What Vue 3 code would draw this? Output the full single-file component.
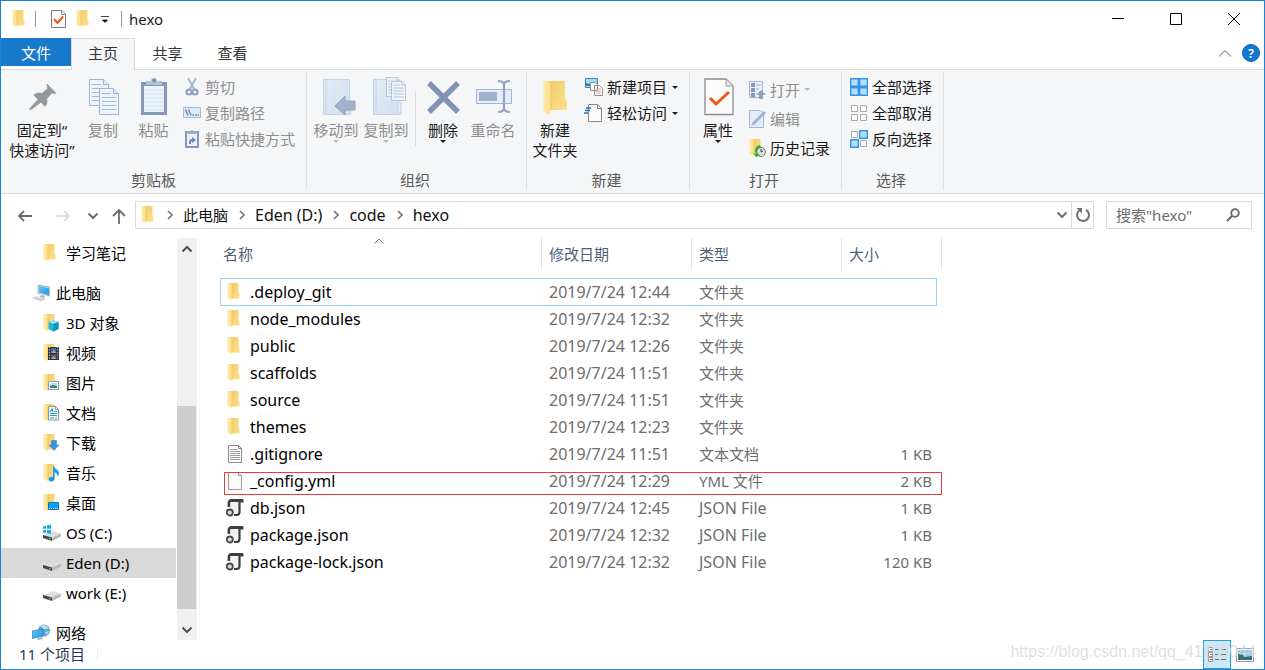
<script setup>
import { ref } from 'vue'

const tree = [
  { label: '学习笔记', icon: 'folder', level: 2 },
  { label: '此电脑', icon: 'pc', level: 1, spaced: true },
  { label: '3D 对象', icon: 'f-3d', level: 2 },
  { label: '视频', icon: 'f-video', level: 2 },
  { label: '图片', icon: 'f-picture', level: 2 },
  { label: '文档', icon: 'f-doc', level: 2 },
  { label: '下载', icon: 'f-download', level: 2 },
  { label: '音乐', icon: 'f-music', level: 2 },
  { label: '桌面', icon: 'f-desktop', level: 2 },
  { label: 'OS (C:)', icon: 'drive-os', level: 2 },
  { label: 'Eden (D:)', icon: 'drive', level: 2, selected: true },
  { label: 'work (E:)', icon: 'drive', level: 2 },
  { label: '网络', icon: 'network', level: 1, spaced: true }
]

const files = [
  { name: '.deploy_git', date: '2019/7/24 12:44', type: '文件夹', size: '', icon: 'folder', focused: true },
  { name: 'node_modules', date: '2019/7/24 12:32', type: '文件夹', size: '', icon: 'folder' },
  { name: 'public', date: '2019/7/24 12:26', type: '文件夹', size: '', icon: 'folder' },
  { name: 'scaffolds', date: '2019/7/24 11:51', type: '文件夹', size: '', icon: 'folder' },
  { name: 'source', date: '2019/7/24 11:51', type: '文件夹', size: '', icon: 'folder' },
  { name: 'themes', date: '2019/7/24 12:23', type: '文件夹', size: '', icon: 'folder' },
  { name: '.gitignore', date: '2019/7/24 11:51', type: '文本文档', size: '1 KB', icon: 'textfile' },
  { name: '_config.yml', date: '2019/7/24 12:29', type: 'YML 文件', size: '2 KB', icon: 'blankfile', marked: true },
  { name: 'db.json', date: '2019/7/24 12:45', type: 'JSON File', size: '1 KB', icon: 'json', latin: true },
  { name: 'package.json', date: '2019/7/24 12:32', type: 'JSON File', size: '1 KB', icon: 'json', latin: true },
  { name: 'package-lock.json', date: '2019/7/24 12:32', type: 'JSON File', size: '120 KB', icon: 'json', latin: true }
]

const crumbs = [
  { label: '此电脑' },
  { label: 'Eden (D:)', latin: true },
  { label: 'code', latin: true },
  { label: 'hexo', latin: true }
]
const query = ref('')
</script>

<template>
  <div class="window">
    <svg class="defs" aria-hidden="true">
      <defs>
        <linearGradient id="gBody" x1="0" y1="0" x2="1" y2="1">
          <stop offset="0" stop-color="#f0cb68" /><stop offset="1" stop-color="#ffdf8c" />
        </linearGradient>
        <linearGradient id="gFlap" x1="0" y1="0" x2="1" y2="0">
          <stop offset="0" stop-color="#ffe9a6" /><stop offset="1" stop-color="#fddf8b" />
        </linearGradient>
        <linearGradient id="gBlue" x1="0" y1="0" x2="1" y2="1">
          <stop offset="0" stop-color="#e4edf8" /><stop offset="1" stop-color="#d0def0" />
        </linearGradient>
        <linearGradient id="gScreen" x1="0" y1="0" x2="1" y2="1">
          <stop offset="0" stop-color="#67c5f7" /><stop offset="1" stop-color="#1d93e6" />
        </linearGradient>
      </defs>
      <symbol id="folder" viewBox="0 0 18 18">
        <path d="M3 0h8.500v10l1 1v4.500H5V4z" fill="url(#gBody)" />
        <path d="M0.500 0H3l2 2v15L.500 15z" fill="url(#gFlap)" />
        <path d="M5 2.500v12" stroke="#e6bd58" stroke-width=".6" />
      </symbol>
      <symbol id="f-3d" viewBox="0 0 18 18">
        <use href="#folder" width="18" height="18" />
        <path d="M5.500 8l5-1.500L15.500 8v7l-5 2.500-5-2.500z" fill="#22b5d5" />
        <path d="M5.500 8l5-1.500L15.500 8l-5 2z" fill="#8fe3f2" /><path d="M10.500 10l5-2v7l-5 2.500z" fill="#0994b8" />
      </symbol>
      <symbol id="f-video" viewBox="0 0 18 18">
        <use href="#folder" width="18" height="18" />
        <path d="M5 3h11v13H5z" fill="#333" /><path d="M6.500 3v13M14.500 3v13" stroke="#ccc" stroke-width="1.200" stroke-dasharray="1 1.600" />
        <path d="M8 4h5v5H8zM8 10.500h5V15H8z" fill="#3069bd" /><path d="M8 9l3-3 2 3zM8 15l3-3 2 3z" fill="#d7a456" />
      </symbol>
      <symbol id="f-picture" viewBox="0 0 18 18">
        <use href="#folder" width="18" height="18" />
        <path d="M5.500 7.500h10v8h-10z" fill="#fff" stroke="#959ba1" /><path d="M7 9h7v5H7z" fill="#b5def5" /><path d="M7 12l3-1 4 1v2H7z" fill="#397d88" />
      </symbol>
      <symbol id="f-doc" viewBox="0 0 18 18">
        <use href="#folder" width="18" height="18" />
        <path d="M5.500 2.500h7l3 3v10.500h-10z" fill="#fff" stroke="#8b949c" /><path d="M12.500 2.500v3h3" fill="none" stroke="#8b949c" />
        <path d="M7 8l2-3 1 3M11 7.500h3M7 9.500h7M7 11.500h7M11 14H7M12 14h2" stroke="#23a0c5" stroke-width="1.200" fill="none" />
      </symbol>
      <symbol id="f-download" viewBox="0 0 18 18">
        <use href="#folder" width="18" height="18" />
        <path d="M8.500 6.500h5v4.500H16l-5 5.500L6 11h2.500z" fill="#3b93df" stroke="#2979c5" stroke-width=".5" />
      </symbol>
      <symbol id="f-music" viewBox="0 0 18 18">
        <use href="#folder" width="18" height="18" />
        <path d="M10 2.500h1.500c0 3 4.500 3 4.500 6.500 0 1.500-.5 2.500-1.500 3.500 0-3-1.500-4-3-4v6c0 1.800-1.300 3-3.200 3-1.800 0-2.800-.9-2.800-2.100 0-1.700 2-3 4.500-2.600z" fill="#159df1" />
      </symbol>
      <symbol id="f-desktop" viewBox="0 0 18 18">
        <use href="#folder" width="18" height="18" />
        <path d="M5.500 8.500h10v7h-10z" fill="#159df1" stroke="#0873ba" /><path d="M6 14.500h9" stroke="#d4efff" stroke-dasharray="1 1" />
      </symbol>
      <symbol id="pc" viewBox="0 0 18 18">
        <path d="M6 1l12 2v9L6 9z" fill="#e8eef3" stroke="#687c8c" stroke-width=".6" /><path d="M7 2l10 2v7L7 8.500z" fill="url(#gScreen)" />
        <path d="M9 11l4 1-1 2-4-1z" fill="#aab5be" /><path d="M0 14l4-2 9 2.500-4 2z" fill="#d6dce1" /><path d="M1 14l8 2.500 4-2" stroke="#a2adb5" fill="none" stroke-width=".7" />
      </symbol>
      <symbol id="drive" viewBox="0 0 18 18">
        <path d="M0 11l10-4 8 2.500-9 4z" fill="#dedede" /><path d="M0 11l9 2.500V17L0 14z" fill="#464646" /><path d="M9 13.500l9-4v3L9 17z" fill="#b8b8b8" /><path d="M6 14.500l1.500.4" stroke="#4ee354" stroke-width="1.300" />
      </symbol>
      <symbol id="drive-os" viewBox="0 0 18 18">
        <use href="#drive" width="18" height="18" />
        <path d="M-.2 2.500l3.200-.7v3H-.2zM4 1.500l4-.8v4H4zM-.2 6H3v3l-3.200-.6zM4 6h4v4l-4-.7z" fill="#12aee8" />
      </symbol>
      <symbol id="network" viewBox="0 0 18 18">
        <circle cx="12" cy="6.500" r="6" fill="#55a8d5" /><path d="M8 3c3-4 8-1 9 2-2-1-3 1-5 0s-1-2-4-2M13 8l4-1-2 4z" fill="#b8dcec" />
        <path d="M0 7l11-2v7L0 14.500z" fill="url(#gScreen)" stroke="#2674b5" stroke-width=".6" /><path d="M5 14l1 2 5-1-1-2z" fill="#9db6c8" />
      </symbol>
      <symbol id="textfile" viewBox="0 0 18 18">
        <path d="M1.500.500h10l3 3v14h-13z" fill="#fff" stroke="#8a8a8a" /><path d="M11.500.500v3h3" fill="none" stroke="#8a8a8a" />
        <path d="M3 4.500h7.500M3 6.500h10M3 8.500h10M3 10.500h10M3 12.500h10M3 14.500h10" stroke="#999" />
      </symbol>
      <symbol id="blankfile" viewBox="0 0 18 18">
        <path d="M1.500.500h10l3 3v14h-13z" fill="#fafafa" stroke="#9b9b9b" /><path d="M11.500.500v3h3" fill="#eee" stroke="#9b9b9b" />
      </symbol>
      <symbol id="json" viewBox="0 0 18 18">
        <path d="M3 8V4Q3 1.500 5.500 1.500H17" fill="none" stroke="#3c3e40" stroke-width="2.800" />
        <path d="M4.500 3H13v10q0 2.500-2.500 2.500H8L4.500 9z" fill="#f1f2f3" />
        <path d="M13.500 3v10q0 3-3 3H8" fill="none" stroke="#3c3e40" stroke-width="2.200" />
        <path d="M13.500 3.500h4V.500z" fill="#3c3e40" />
        <circle cx="3.800" cy="13.500" r="3" fill="#ddd" stroke="#46484b" stroke-width="1.800" />
      </symbol>
      <symbol id="checkdoc" viewBox="0 0 30 38">
        <path d="M1 1h21l7 7v28.500H1z" fill="#fbfbfb" stroke="#8b8b8b" stroke-width="1.300" /><path d="M22 1v7h7z" fill="#e5e5e5" stroke="#a2a2a2" />
        <path d="M6 20l6 6L25 14" fill="none" stroke="#ee5716" stroke-width="3" />
      </symbol>
      <symbol id="checkdoc-s" viewBox="0 0 15 18">
        <path d="M.500.500h10.500l3.500 3.500v13.500H.500z" fill="#fbfbfb" stroke="#7d7d7d" /><path d="M10.500.500v4h4" fill="#e5e5e5" stroke="#8d8d8d" />
        <path d="M3 9l3.500 4L12 6.500" fill="none" stroke="#ee5716" stroke-width="2" />
      </symbol>
      <symbol id="page" viewBox="0 0 20 27">
        <path d="M.500.500h14l5 5v21H.500z" fill="#edf3fb" stroke="#a0b3cf" /><path d="M14.500.500v5h5" fill="#dce8f5" stroke="#a0b3cf" />
        <path d="M3 5.500h9M3 9.500h14M3 13.500h14M3 17.500h14M3 21.500h14" stroke="#a6b9d3" />
      </symbol>
      <symbol id="chev" viewBox="0 0 12 12"><path d="M1.500 3.500L6 8l4.500-4.500" fill="none" stroke="currentColor" stroke-width="2" /></symbol>
    </svg>

    <header class="titlebar">
      <svg class="ic18"><use href="#folder" /></svg>
      <span class="bar"></span>
      <svg class="qa-check"><use href="#checkdoc-s" /></svg>
      <svg class="ic18 qa-folder"><use href="#folder" /></svg>
      <svg class="qa-more" viewBox="0 0 8 8"><path d="M0 .500h8M1.500 4h5L4 6.500z" fill="#111" stroke="#111" stroke-width=".8" /></svg>
      <span class="bar"></span>
      <h1>hexo</h1>
      <div class="controls">
        <button aria-label="最小化"><svg viewBox="0 0 12 12"><path d="M0 5.500h12" /></svg></button>
        <button aria-label="最大化"><svg viewBox="0 0 12 12"><path d="M.500.500h11v11H.500z" /></svg></button>
        <button aria-label="关闭"><svg viewBox="0 0 12 12"><path d="M0 0l12 12M12 0L0 12" /></svg></button>
      </div>
    </header>

    <nav class="tabs">
      <button class="tab file">文件</button>
      <button class="tab active">主页</button>
      <button class="tab">共享</button>
      <button class="tab">查看</button>
      <div class="tab-end">
        <button aria-label="折叠功能区"><svg class="collapse" viewBox="0 0 12 7"><path d="M0 6.500l6-6 6 6" fill="none" stroke="#a0a0a0" stroke-width="1.200" /></svg></button>
        <button class="help" aria-label="帮助">?</button>
      </div>
    </nav>

    <section class="ribbon">
      <div class="group g-clip">
        <div class="tools">
          <button class="big pin">
            <svg class="art" viewBox="0 0 44 44"><path d="M9.500 33L18 23.500 14 19c2-2 5-2.500 8-1.500l5.500-5L27 8l9 9.500-4.500-.5-5 6c1 3 .5 5-1.500 7.500L21 26 10.500 34z" fill="#8f999f" stroke="#8f999f" stroke-width=".8" /></svg>
            <span>固定到“<br />快速访问”</span>
          </button>
          <button class="big copy off">
            <svg class="art" viewBox="0 0 44 44"><use href="#page" x="8" y="3" width="20" height="27" /><use href="#page" x="18" y="12" width="20" height="27" /></svg>
            <span>复制</span>
          </button>
          <button class="big paste off">
            <svg class="art" viewBox="0 0 44 44"><path d="M9 6h26v33H9z" fill="#8698b9" /><path d="M12 10h20v26H12z" fill="#eaf2fb" /><path d="M12 14h20M12 18h20M12 22h20M12 26h20M12 30h20M12 34h20" stroke="#d3e0f0" /><path d="M14 5h5a3 3 0 0 1 6 0h5v4H14z" fill="#b1c1d8" /><circle cx="22" cy="4.500" r="2" fill="#7f92b2" /></svg>
            <span>粘贴</span>
          </button>
          <div class="stack">
            <button class="small off"><svg viewBox="0 0 18 18"><path d="M5 0l6 11M13 0L7 11" stroke="#a7b7ce" stroke-width="2" /><circle cx="6" cy="14" r="2.500" fill="none" stroke="#8b9dba" stroke-width="2" /><circle cx="12" cy="14" r="2.500" fill="none" stroke="#8b9dba" stroke-width="2" /></svg>剪切</button>
            <button class="small off"><svg viewBox="0 0 18 18"><path d="M.500 3.500h17v10H.500z" fill="#dfeaf7" stroke="#a8b9d0" /><path d="M2.500 5.500l2.500 6M5.500 5.500l2.500 6M9.500 11h1.500M12 11h1.500M14.500 11H16" stroke="#6e7f9f" stroke-width="1.300" /></svg>复制路径</button>
            <button class="small off"><svg viewBox="0 0 18 18"><path d="M3 2h12v15H3z" fill="#eaf2fb" stroke="#8799b9" stroke-width="2" /><path d="M5 1h2l2-1 2 1h2v3H5z" fill="#9eafca" /><path d="M6 14c0-4 1-5 3-5V7l4 3-4 3v-2c-1 0-1 1-1 3z" fill="#6f86b0" /></svg>粘贴快捷方式</button>
          </div>
        </div>
        <div class="caption">剪贴板</div>
      </div>

      <div class="group g-org">
        <div class="tools">
          <button class="big off">
            <svg class="art" viewBox="0 0 44 44"><path d="M9.500 3.500h26V38.500h-26z" fill="url(#gBlue)" stroke="#c3d2e6" /><path d="M12 4v34M34 25l3 3v10h-3" stroke="#c3d2e6" fill="none" /><path d="M21 30l10-10v5h10v9H31v5z" fill="#a2b1cc" stroke="#93a5c3" /></svg>
            <span>移动到</span><i class="caret"></i>
          </button>
          <button class="big off">
            <svg class="art" viewBox="0 0 44 44"><path d="M9.500 3.500h26V38.500h-26z" fill="url(#gBlue)" stroke="#c3d2e6" /><path d="M12 4v34M34 38V27q2-4 3 0v11z" stroke="#c3d2e6" fill="#e5edf7" /><use href="#page" x="22" y="1" width="15" height="20" /><use href="#page" x="27" y="5" width="15" height="20" /></svg>
            <span>复制到</span><i class="caret"></i>
          </button>
          <span class="split"></span>
          <button class="big">
            <svg class="art" viewBox="0 0 44 44"><path d="M8 7l29 29M37 7L8 36" stroke="#8193b5" stroke-width="5.500" /></svg>
            <span>删除</span><i class="caret"></i>
          </button>
          <button class="big off">
            <svg class="art" viewBox="0 0 44 44"><path d="M5.500 13.500h35v14h-35z" fill="#e5edf8" stroke="#a3b4ce" /><path d="M8 16h18v9H8z" fill="#a0b1cd" /><path d="M27 5q6 0 6 4v23q0 4-6 4M39 5q-6 0-6 4v23q0 4 6 4" fill="none" stroke="#91a3c0" stroke-width="2.200" /></svg>
            <span>重命名</span>
          </button>
        </div>
        <div class="caption">组织</div>
      </div>

      <div class="group g-new">
        <div class="tools">
          <button class="big wide">
            <svg class="art" viewBox="0 0 44 44"><path d="M16 5h16v18l2 2v9H16z" fill="url(#gBody)" /><path d="M10.500 5H16l2 4v26l-2 4-5.500-4z" fill="url(#gFlap)" /><path d="M18 8v26" stroke="#e6bd58" stroke-width=".6" /></svg>
            <span>新建<br />文件夹</span>
          </button>
          <div class="stack">
            <button class="small"><svg viewBox="0 0 18 18"><path d="M.500.500h12v9H.500z" fill="#a7daf3" stroke="#3e86a2" /><path d="M1 5l4 1 3-2v4H1z" fill="#397ba3" /><path d="M5.500 4.500h5l2 2v6h-7zM9.500 7.500h5l3 3v7h-8z" fill="#fff" stroke="#8e8e8e" /><path d="M11 11h5M11 13h5M11 15h5" stroke="#d7a09a" /></svg>新建项目<i class="caret"></i></button>
            <button class="small"><svg viewBox="0 0 18 18"><path d="M3.500.500h9l4 4v13h-13z" fill="#fafafa" stroke="#888" /><path d="M12.500.500v4h4" fill="none" stroke="#888" /><path d="M1 4h5M0 6.500h5M-1 9h4" stroke="#2376b9" stroke-width="1.300" /></svg>轻松访问<i class="caret"></i></button>
          </div>
        </div>
        <div class="caption">新建</div>
      </div>

      <div class="group g-open">
        <div class="tools">
          <button class="big wide">
            <svg class="art" viewBox="0 0 44 44"><use href="#checkdoc" x="8" y="2" width="30" height="38" /></svg>
            <span>属性</span><i class="caret"></i>
          </button>
          <div class="stack loose">
            <button class="small off"><svg viewBox="0 0 18 18"><path d="M.500.500h13v16H.500z" fill="#e8f0fa" stroke="#a3b4cf" /><path d="M2 2h4v4H2zM2 7h4v4H2zM2 12h4v4H2z" fill="#8799b9" /><path d="M7 4h5M7 8h3" stroke="#a3b4cf" /><path d="M12 9l5 5h-3v4h-4v-4H7z" fill="#8fa2c2" /></svg>打开<i class="caret"></i></button>
            <button class="small off"><svg viewBox="0 0 18 18"><path d="M.500.500h11l3 3v14H.500z" fill="#e2ebf7" stroke="#a7b8d1" /><path d="M2 16l2-4L15 1l2 2L6 14z" fill="#a0b4d0" /></svg>编辑</button>
            <button class="small"><svg viewBox="0 0 18 18"><use href="#folder" width="18" height="18" /><circle cx="12" cy="13" r="4.500" fill="#ddd" stroke="#777" /><path d="M12 10v3l2-1" stroke="#555" fill="none" /><path d="M11 6C6 7 5 11 7 15l-3-1 3 4 4-2-2-1C7 12 9 9 12 9z" fill="#30ae35" /></svg>历史记录</button>
          </div>
        </div>
        <div class="caption">打开</div>
      </div>

      <div class="group g-select">
        <div class="tools">
          <div class="stack">
            <button class="small"><svg viewBox="0 0 18 18"><path d="M.700.700h7.600v7.600H.700zM9.700.700h7.600v7.600H9.700zM.700 9.700h7.600v7.600H.700zM9.700 9.700h7.600v7.600H9.700z" fill="#b4defc" stroke="#3294e6" stroke-width="1.400" /></svg>全部选择</button>
            <button class="small"><svg viewBox="0 0 18 18"><path d="M1.500 1.500h6v6h-6zM10.500 1.500h6v6h-6zM1.500 10.500h6v6h-6zM10.500 10.500h6v6h-6z" fill="#fafafa" stroke="#a9a9a9" /></svg>全部取消</button>
            <button class="small"><svg viewBox="0 0 18 18"><path d="M1.500 1.500h6v6h-6zM10.500 10.500h6v6h-6z" fill="#fafafa" stroke="#a9a9a9" /><path d="M9.700.700h7.600v7.600H9.700zM.700 9.700h7.600v7.600H.700z" fill="#b4defc" stroke="#3294e6" stroke-width="1.400" /></svg>反向选择</button>
          </div>
        </div>
        <div class="caption">选择</div>
      </div>
    </section>

    <div class="address">
      <button class="nav" aria-label="后退"><svg viewBox="0 0 16 16"><path d="M15 8H2M7 3L2 8l5 5" stroke="#6b6b6b" stroke-width="1.800" fill="none" /></svg></button>
      <button class="nav fwd" aria-label="前进"><svg viewBox="0 0 16 16"><path d="M1 8h13M9 3l5 5-5 5" stroke="#dcdcdc" stroke-width="1.800" fill="none" /></svg></button>
      <button class="nav recent" aria-label="最近位置"><svg viewBox="0 0 12 12"><use href="#chev" /></svg></button>
      <button class="nav up" aria-label="上移"><svg viewBox="0 0 16 16"><path d="M8 16V2M2 8l6-6 6 6" stroke="#6b6b6b" stroke-width="1.800" fill="none" /></svg></button>
      <div class="path">
        <svg class="ic18"><use href="#folder" /></svg>
        <template v-for="c in crumbs" :key="c.label">
          <svg class="sep" viewBox="0 0 6 10"><path d="M1 1l4 4-4 4" fill="none" stroke="#777" stroke-width="1.700" /></svg>
          <a href="#" :class="{ latin: c.latin }">{{ c.label }}</a>
        </template>
        <button class="drop" aria-label="以前的位置"><svg viewBox="0 0 12 12"><use href="#chev" /></svg></button>
        <button class="refresh" aria-label="刷新"><svg viewBox="0 0 16 16"><path d="M5.500 2.600A6 6 0 1 0 11 2.800" fill="none" stroke="#6f6f6f" stroke-width="2" /><path d="M1.500 1h5.500v5.500z" fill="#6f6f6f" /></svg></button>
      </div>
      <label class="search">
        <input v-model="query" type="text" placeholder='搜索"hexo"' aria-label="搜索" />
        <svg viewBox="0 0 14 14"><circle cx="9" cy="5" r="3.800" fill="none" stroke="#666" stroke-width="1.800" /><path d="M6.500 7.500L1 13" stroke="#666" stroke-width="2.200" /></svg>
      </label>
    </div>

    <div class="body">
      <aside class="tree">
        <a v-for="t in tree" :key="t.label" href="#" :class="['node', 'l' + t.level, { selected: t.selected, spaced: t.spaced }]">
          <svg class="ic18"><use :href="'#' + t.icon" /></svg><span>{{ t.label }}</span>
        </a>
      </aside>
      <div class="scroll">
        <button aria-label="向上滚动"><svg class="flip" viewBox="0 0 12 12"><use href="#chev" /></svg></button>
        <span class="above"></span><span class="thumb"></span><span class="below"></span>
        <button aria-label="向下滚动"><svg viewBox="0 0 12 12"><use href="#chev" /></svg></button>
      </div>
      <main class="list">
        <table>
          <colgroup><col class="c-name" /><col class="c-date" /><col class="c-date" /><col class="c-size" /></colgroup>
          <thead>
            <tr>
              <th>名称<svg class="sort" viewBox="0 0 10 6"><path d="M.500 5.500L5 1l4.500 4.500" fill="none" stroke="#777" /></svg></th>
              <th>修改日期</th><th>类型</th><th>大小</th>
            </tr>
          </thead>
          <tbody>
            <tr v-for="f in files" :key="f.name" :class="{ focused: f.focused, marked: f.marked }">
              <td class="name"><div><svg :class="['ic18', f.icon]"><use :href="'#' + f.icon" /></svg><span>{{ f.name }}</span></div></td>
              <td class="date">{{ f.date }}</td>
              <td :class="{ latin: f.latin }">{{ f.type }}</td>
              <td class="size">{{ f.size }}</td>
            </tr>
          </tbody>
        </table>
      </main>
    </div>

    <footer class="status">
      <span class="count">11 个项目</span>
      <span class="tick"></span>
      <div class="views">
        <button class="on" aria-label="详细信息"><svg viewBox="0 0 18 16"><path d="M.500.500h4v4h-4zM.500 5.500h4v4h-4zM.500 10.500h4v4h-4z" fill="#fff" stroke="#999" /><path d="M2 2h2v1H2z" fill="#2b8f9f" /><path d="M2 7h2v1H2z" fill="#b48a55" /><path d="M2 12h2v1H2z" fill="#c33" /><path d="M7 2.500h4M13 2.500h5M7 7.500h4M13 7.500h5M7 12.500h4M13 12.500h5" stroke="#5c6e77" /></svg></button>
        <button aria-label="大图标"><svg viewBox="0 0 18 16"><path d="M.500 1.500h17v13H.500z" fill="#fff" stroke="#9a9a9a" /><path d="M2 3h14v10H2z" fill="#8fc8f0" /><path d="M2 7q5 0 7 3l7-1v4H2z" fill="#3d706a" /><path d="M6 12h10v1H2z" fill="#2d69a9" /></svg></button>
      </div>
      <span class="watermark">https://blog.csdn.net/qq_41799044</span>
    </footer>
  </div>
</template>

<style>
body { background: #fff; }
</style>

<style scoped>
* { box-sizing: border-box; }
.window {
  position: relative;
  display: flex; flex-direction: column; height: 100vh; overflow: hidden;
  border: 1px solid #1883d7; background: #fff; color: #1a1a1a;
  font: 15px/20px "Noto Sans", "Noto Sans CJK SC", sans-serif;
}
.defs { position: absolute; width: 0; height: 0; }
button { border: 0; padding: 0; background: none; font: inherit; color: inherit; }
a { color: inherit; text-decoration: none; }
svg { display: block; flex: none; }
.ic18 { width: 18px; height: 18px; }
.latin { font-size: 16px; }

.titlebar { display: flex; align-items: center; height: 37px; padding: 0 0 1px 11px; flex: none; }
.bar { width: 1px; height: 16px; margin: 0 15px 0 5px; background: #999; }
.qa-check { width: 15px; height: 18px; }
.qa-folder { margin-left: 10px; }
.qa-more { width: 8px; height: 8px; margin: 2px 7px 0 7px; }
.titlebar h1 { margin: 0 0 0 -8px; font-size: 15px; font-weight: 400; }
.controls { display: flex; margin: 0 1px 0 auto; align-self: stretch; }
.controls button { display: flex; align-items: center; justify-content: center; width: 58px; }
.controls svg { width: 12px; height: 12px; fill: none; stroke: #000; }

.tabs { display: flex; height: 31px; flex: none; }
.tab { width: 65px; padding-bottom: 2px; color: #333; border: 1px solid transparent; border-bottom: 0; }
.tab.file { width: 70px; height: 28px; padding: 0; background: #1979ca; color: #fff; }
.tab.active { width: 64px; height: 32px; padding-bottom: 3px; background: #f5f6f7; border-color: #dadbdc; position: relative; z-index: 1; }
.tab-end { display: flex; align-items: center; gap: 11px; margin-left: auto; padding: 0 4px 1px 0; }
.collapse { width: 12px; height: 7px; }
.help { width: 18px; height: 18px; border-radius: 50%; background: #0f78d4; border: 1px solid #1663a8; color: #fff; font-size: 13px; line-height: 16px; font-weight: 600; }

.ribbon { display: flex; flex: none; height: 125px; padding: 2px 0 3px; background: #f5f6f7; border: solid #dadbdc; border-width: 1px 0; }
.group { display: flex; flex-direction: column; justify-content: space-between; border-right: 1px solid #e1e2e3; }
.g-clip { width: 306px; }
.g-org { width: 220px; }
.g-new { width: 163px; }
.g-open { width: 152px; }
.g-select { width: 102px; }
.g-clip .tools { padding-left: 3px; }
.g-org .tools { padding-left: 4px; }
.tools { display: flex; align-items: flex-start; white-space: nowrap; }
.caption { padding-right: 3px; text-align: center; color: #5a5a5a; }
.g-clip .caption { padding-right: 0; }
.big { display: flex; flex-direction: column; align-items: center; width: 50px; padding-top: 4px; }
.big.pin { width: 76px; }
.big.copy { width: 46px; }
.big.paste { width: 55px; }
.big.wide { width: 56px; }
.art { width: 44px; height: 44px; }
.off { color: #8e8e8e; }
.caret { width: 0; border: solid transparent; border-width: 3px 3px 0; border-top-color: #1a1a1a; }
.off .caret { border-top-color: #b8b8b8; }
.split { width: 1px; height: 55px; margin: 19px 2px 0 4px; background: #dcdddf; }
.stack { display: flex; flex-direction: column; align-items: flex-start; padding: 2px 0 0 2px; }
.small { display: flex; align-items: center; gap: 4px; height: 26px; }
.small svg { width: 18px; height: 18px; overflow: visible; }
.stack.loose { padding: 3px 0 0 3px; }
.loose .small { gap: 3px; height: 29px; }
.small .caret { margin-left: 1px; }
.g-select .stack { padding-left: 8px; }

.address { display: flex; align-items: center; flex: none; height: 44px; padding: 0 12px 2px 16px; }
.nav { margin-top: 2px; color: #6b6b6b; }
.nav svg { width: 16px; height: 16px; }
.nav.fwd { margin-left: 22px; }
.nav.recent { margin-left: 16px; }
.nav.recent svg, .drop svg, .scroll svg { width: 12px; height: 12px; }
.nav.up { margin-left: 12px; margin-right: 8px; }
.path { display: flex; align-items: center; flex: 1; height: 28px; padding: 0 0 1px 5px; border: 1px solid #d9d9d9; color: #111; }
.path .sep { width: 6px; height: 10px; margin: 0 10px 0 11px; }
.path .ic18 + .sep { margin-left: 8px; }
.drop { margin-left: auto; padding-right: 3px; color: #6f6f6f; }
.refresh { display: flex; align-items: center; justify-content: center; align-self: stretch; width: 22px; margin-bottom: -1px; border-left: 1px solid #d9d9d9; }
.refresh svg { width: 16px; height: 16px; }
.search { display: flex; align-items: center; width: 146px; height: 28px; margin-left: 12px; padding: 0 11px 0 9px; border: 1px solid #d9d9d9; }
.search input { flex: 1; min-width: 0; border: 0; padding: 0; outline: 0; background: none; font: inherit; color: #222; }
.search input::placeholder { color: #6d6d6d; opacity: 1; }
.search svg { width: 14px; height: 14px; }

.body { display: flex; flex: 1; min-height: 0; }
.tree { width: 176px; color: #000; }
.node { display: flex; align-items: center; gap: 6px; height: 30px; padding-left: 31px; margin-right: 1px; }
.node.l2 { padding-left: 42px; gap: 5px; }
.node .ic18 { overflow: visible; }
.node.spaced { margin-top: 10px; }
.node.selected { background: #d9d9d9; }
.scroll { display: flex; flex-direction: column; width: 20px; background: #f0f0f0; color: #505050; }
.scroll button { display: flex; align-items: center; justify-content: center; height: 21px; flex: none; }
.flip { transform: rotate(180deg); }
.above { flex: 147; }
.thumb { flex: 203; margin-right: 1px; background: #cdcdcd; }
.below { flex: 10; }
.list { flex: 1; margin-left: 2px; padding-left: 20px; border-left: 1px solid #f5f5f5; }

table { width: 722px; table-layout: fixed; border-collapse: separate; border-spacing: 0; color: #6d6d6d; }
.c-name { width: 322px; }
.c-date { width: 150px; }
.c-size { width: 100px; }
th { position: relative; height: 32px; padding: 0 0 0 7px; text-align: left; font-weight: 400; color: #4c607a; border-right: 1px solid #e5e5e5; }
th:first-child { padding-left: 3px; }
.sort { position: absolute; top: 0; left: 50%; width: 10px; height: 6px; margin-left: -7px; }
tbody::before { content: ""; display: block; height: 8px; }
tbody tr { position: relative; }
td { height: 27px; padding: 0 0 0 7px; white-space: nowrap; }
td.name { color: #000; font-size: 16px; }
td.name div { display: flex; align-items: center; gap: 5px; }
td.name .json { margin: 0 1px 0 -1px; }
td.date { font-size: 16px; }
td.size { text-align: right; padding-right: 10px; }
.focused::after, .marked::after { content: ""; position: absolute; pointer-events: none; }
.focused::after { inset: 0 5px -1px 0; border: 1px solid #99d1ff; }
.marked::after { inset: 5px 0 -1px 4px; border: 1px solid #f03a3a; }

.status { position: relative; display: flex; align-items: center; flex: none; height: 29px; padding-left: 18px; color: #1e395b; }
.count { padding-bottom: 2px; }
.tick { width: 1px; height: 13px; margin-left: 12px; background: #eee; }
.views { display: flex; margin-left: auto; padding-right: 5px; align-self: stretch; }
.views button { display: flex; align-items: center; justify-content: center; width: 28px; border: 1px solid transparent; }
.views .on { background: #cce8f6; border-color: #26a0da; }
.views svg { width: 18px; height: 16px; }
.watermark { position: absolute; right: 8px; top: 2px; color: rgb(218 218 218 / 85%); font: 16px/20px "Liberation Sans", sans-serif; pointer-events: none; }
</style>
